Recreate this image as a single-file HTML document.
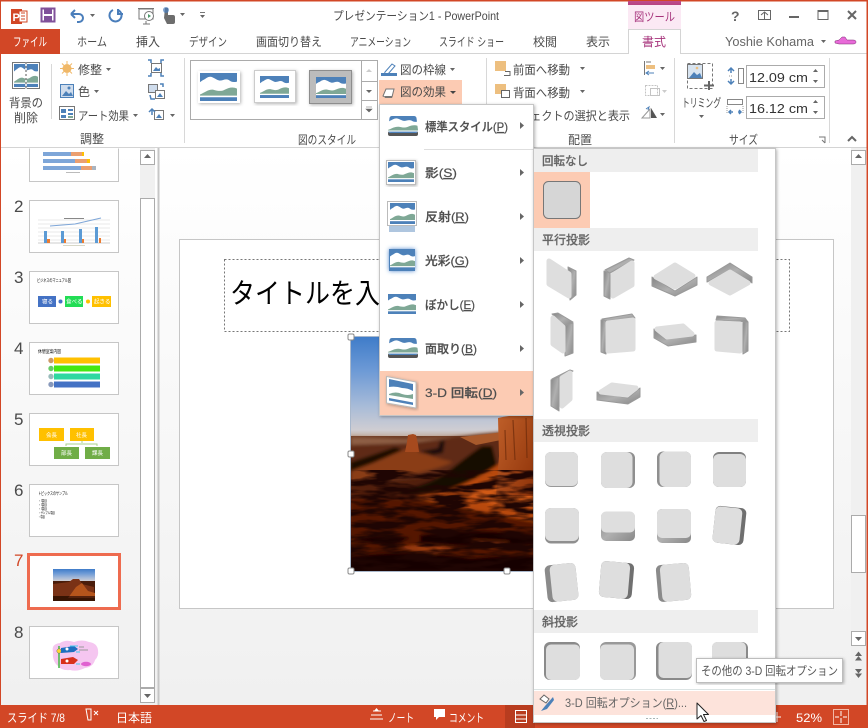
<!DOCTYPE html>
<html lang="ja">
<head>
<meta charset="utf-8">
<title>PowerPoint</title>
<style>
html,body{margin:0;padding:0;background:#fff;width:868px;height:728px;overflow:hidden}
svg{display:block}
text{font-family:"Liberation Sans","Noto Sans CJK JP",sans-serif;font-size:12px;fill:#4a4a4a}
.w{fill:#fff}
.mn{font-weight:500;fill:#4e4e4e;stroke:#4e4e4e;stroke-width:.2}
.hd{font-weight:500;fill:#666;stroke:#666;stroke-width:.2}
.f{fill:#dedede;stroke:#dedede;stroke-width:5;stroke-linejoin:round}
.s{fill:url(#sg);stroke:#9a9a9a;stroke-width:1;stroke-linejoin:round}
.d{fill:#dedede}
.a{fill:#666}
.i{fill:none;stroke:#666;stroke-width:1}
.btn{fill:#fff;stroke:#ababab;stroke-width:1}
.h{fill:#fff;stroke:#8a8a8a;stroke-width:1}
</style>
</head>
<body>
<svg width="868" height="728" viewBox="0 0 868 728" xmlns="http://www.w3.org/2000/svg">
<defs>
<linearGradient id="bg" x1="0" y1="0" x2="0" y2="1"><stop offset="0" stop-color="#fff"/><stop offset="1" stop-color="#f0f0f0"/></linearGradient>
<linearGradient id="sg" x1="0" y1="0" x2="1" y2="1"><stop offset="0" stop-color="#858585"/><stop offset=".5" stop-color="#b0b0b0"/><stop offset="1" stop-color="#888"/></linearGradient>
<linearGradient id="sky" x1="0" y1="0" x2="0" y2="1"><stop offset="0" stop-color="#3f7cc9"/><stop offset=".35" stop-color="#6f9bd6"/><stop offset=".7" stop-color="#a9bcd8"/><stop offset=".93" stop-color="#cfcdd2"/><stop offset="1" stop-color="#c2ada0"/></linearGradient>
<linearGradient id="gnd" x1="0" y1="0" x2="0" y2="1"><stop offset="0" stop-color="#6e3a22"/><stop offset=".2" stop-color="#4a2010"/><stop offset=".55" stop-color="#5a1e08"/><stop offset="1" stop-color="#200804"/></linearGradient>
<linearGradient id="rock" x1="0" y1="0" x2="1" y2="1"><stop offset="0" stop-color="#c0602a"/><stop offset="1" stop-color="#8e3208"/></linearGradient>
<linearGradient id="pinkb" x1="0" y1="0" x2="0" y2="1"><stop offset="0" stop-color="#c04c8c"/><stop offset="1" stop-color="#b5427f"/></linearGradient>
<filter id="sh" x="-10%" y="-10%" width="120%" height="120%"><feDropShadow dx="1" dy="1" stdDeviation="1.5" flood-color="#000" flood-opacity=".3"/></filter>
<filter id="glow" x="-30%" y="-30%" width="160%" height="160%"><feDropShadow dx="0" dy="0" stdDeviation="2" flood-color="#3f7cc9" flood-opacity=".9"/></filter>
<filter id="soft" x="-10%" y="-10%" width="120%" height="120%"><feGaussianBlur stdDeviation="1.6"/></filter>
<filter id="blur1"><feGaussianBlur stdDeviation=".35"/></filter>
<filter id="tex" x="0" y="0" width="100%" height="100%" color-interpolation-filters="sRGB"><feTurbulence type="fractalNoise" baseFrequency=".03 .14" numOctaves="3" seed="4"/><feColorMatrix values="0 0 0 0 .12  0 0 0 0 .02  0 0 0 0 .01  4 0 0 0 -1.5"/></filter>
<symbol id="pic" viewBox="0 0 36 26" preserveAspectRatio="none">
<rect width="36" height="26" fill="#fff"/>
<path d="M0 0H36V8C32 9 30 8 28 6.500C25 5 22 7 20 7C17 7.500 13 3.500 10 3.500C7 3.500 5 6 3 6.500L0 8.500Z" fill="#4d81b9"/>
<path d="M0 20C5 18 8 15 13 15.500C17 16.500 20 17.500 24 15.500C28 13.500 32 12.500 36 14.500V21H0Z" fill="#7fa896"/>
<rect y="22.500" width="36" height="3.500" fill="#4d81b9"/>
</symbol>
<clipPath id="trap"><path d="M4 0H26Q28 0 28.500 2L30 14Q30 17 27 17H3Q0 17 0 14L1.500 2Q2 0 4 0Z"/></clipPath>
<clipPath id="photo"><rect x="351" y="337" width="183" height="234"/></clipPath>
</defs>

<!-- base -->
<rect width="868" height="728" fill="#fff"/>
<rect x="0" y="148" width="868" height="557" fill="url(#bg)"/>

<!-- title bar -->
<rect x="0" y="0" width="868" height="1.500" fill="#d24726"/>
<rect x="11" y="9" width="11" height="15" fill="#d24726"/><rect x="19" y="11" width="8" height="11" fill="#fff" stroke="#d24726"/>
<path d="M21 13h4M21 16h4M21 19h4" stroke="#d24726"/>
<text x="12.500" y="21" class="w" style="font-size:11px;font-weight:700">P</text>
<rect x="41.500" y="8.500" width="13" height="13" fill="none" stroke="#80519a" stroke-width="2"/><rect x="44" y="9" width="8" height="5" fill="#80519a"/><rect x="44" y="16" width="8" height="5" fill="#80519a"/>
<path d="M71 14l4-4M71 14l4 4M71 14h8a4 4 0 0 1 0 8h-2" fill="none" stroke="#4a7ebb" stroke-width="2"/>
<path class="a" d="M90 14h5l-2.500 3z"/>
<path d="M113 10a6 6 0 1 0 5 0M118 9v5h5" fill="none" stroke="#4a7ebb" stroke-width="2"/>
<rect x="139" y="9" width="14" height="10" fill="none" stroke="#777"/><path d="M138 8.500h16" stroke="#777"/><circle cx="149" cy="16" r="4.500" fill="#fff" stroke="#777"/><path d="M148 14l3 2-3 2z" fill="#4f9a6c"/><path d="M146 21v3M143 24h7" stroke="#777"/>
<path d="M165 8h3v7h5q2 0 2 2v5q0 2-2 2h-6l-3-6z" fill="#6d6d6d"/><circle cx="166" cy="10" r="3" fill="#4a7ebb" opacity=".7"/>
<path class="a" d="M180 13h5l-2.500 3z"/>
<path d="M200 12.500h5" stroke="#777"/><path class="a" d="M200 15h5l-2.500 3z"/>
<text x="333" y="20" textLength="166" lengthAdjust="spacingAndGlyphs">プレゼンテーション1 - PowerPoint</text>

<rect x="628" y="1" width="53" height="4" fill="url(#pinkb)"/>
<rect x="628" y="5" width="53" height="24" fill="#fbe9f4"/>
<text x="634" y="21" textLength="41" lengthAdjust="spacingAndGlyphs" style="fill:#a6337b">図ツール</text>

<text x="731" y="21" style="font-size:14px;font-weight:700;fill:#666">?</text>
<rect x="758.500" y="10.500" width="12" height="9" class="i"/><path d="M761 15l3.500-3 3.500 3M764.500 12v7" class="i"/>
<rect x="789" y="16" width="10" height="2" fill="#666"/>
<rect x="818" y="10.500" width="10" height="9" fill="none" stroke="#666"/><rect x="818" y="10" width="10" height="2" fill="#666"/>
<path d="M848 11l8 8M856 11l-8 8" stroke="#666" stroke-width="2"/>

<!-- tabs -->
<path d="M0 53.500H628M681 53.500H868" stroke="#d4d4d4"/>
<rect x="0" y="29" width="60" height="25" fill="#d24726"/>
<text x="13" y="46" class="w" textLength="34" lengthAdjust="spacingAndGlyphs">ファイル</text>
<text x="77" y="46" textLength="30" lengthAdjust="spacingAndGlyphs">ホーム</text>
<text x="136" y="46" textLength="24" lengthAdjust="spacingAndGlyphs">挿入</text>
<text x="189" y="46" textLength="38" lengthAdjust="spacingAndGlyphs">デザイン</text>
<text x="256" y="46" textLength="66" lengthAdjust="spacingAndGlyphs">画面切り替え</text>
<text x="350" y="46" textLength="61" lengthAdjust="spacingAndGlyphs">アニメーション</text>
<text x="439" y="46" textLength="65" lengthAdjust="spacingAndGlyphs">スライド ショー</text>
<text x="533" y="46" textLength="24" lengthAdjust="spacingAndGlyphs">校閲</text>
<text x="586" y="46" textLength="24" lengthAdjust="spacingAndGlyphs">表示</text>
<path d="M628.500 54V29.500H680.500V54" fill="#fff" stroke="#d4d4d4"/>
<text x="642" y="46" textLength="24" lengthAdjust="spacingAndGlyphs" style="fill:#a6337b">書式</text>
<text x="725" y="46" textLength="89" lengthAdjust="spacingAndGlyphs" style="font-size:13px;fill:#666">Yoshie Kohama</text>
<path class="a" d="M821 40h5l-2.500 3z"/>
<path d="M835 41l4-1 3-3h3l2 3h6q3 0 3 2t-3 2h-14l-4-1z" fill="#e86ad8" stroke="#7a2b70" stroke-width=".5"/>

<!-- ribbon: 調整 -->
<rect x="12.500" y="62.500" width="27" height="26" fill="#fff" stroke="#777"/>
<use href="#pic" x="14" y="64" width="24" height="23"/>
<path d="M26 62v28" stroke="#fff" stroke-width="1.500"/><path d="M26 62v28" stroke="#555" stroke-dasharray="2 2"/>
<text x="9" y="107" textLength="34" lengthAdjust="spacingAndGlyphs">背景の</text>
<text x="14" y="122" textLength="24" lengthAdjust="spacingAndGlyphs">削除</text>
<path d="M51.500 64v55" stroke="#d8d8d8"/>
<circle cx="67" cy="68.500" r="4.500" fill="#f0b868"/>
<path d="M67 61v3M67 73v3M60 68.500h3M71 68.500h3M62 63.500l2 2M70 71.500l2 2M62 73.500l2-2M70 65.500l2-2" stroke="#f0b868"/>
<text x="78" y="74" textLength="24" lengthAdjust="spacingAndGlyphs">修整</text>
<path class="a" d="M106 68h5l-2.500 3z"/>
<rect x="60.500" y="84.500" width="13" height="13" fill="#cfdcec" stroke="#4d81b9"/><path d="M62 96l4-5 3 3 2-2 2 4z" fill="#4d81b9"/><circle cx="69" cy="88" r="1.500" fill="#4d81b9"/>
<text x="78" y="96" textLength="12" lengthAdjust="spacingAndGlyphs">色</text>
<path class="a" d="M94 90h5l-2.500 3z"/>
<rect x="59.500" y="106.500" width="15" height="13" fill="#fff" stroke="#777"/><path d="M61 109h5v4h-5zM68 109h5v2h-5zM68 113h5v2h-5zM61 115h5v3h-5z" fill="#4d81b9"/><path d="M68 117h5" stroke="#7fa896" stroke-width="2"/>
<text x="78" y="120" textLength="51" lengthAdjust="spacingAndGlyphs">アート効果</text>
<path class="a" d="M133 114h5l-2.500 3z"/>
<rect x="151.500" y="63.500" width="10" height="9" fill="#fff" stroke="#777"/><path d="M153 71l3-4 2 2 2-1v3z" fill="#4d81b9"/>
<path d="M148 60h3v3M164 60h-3v3M148 76h3v-3M164 76h-3v-3" fill="none" stroke="#4d81b9" stroke-width="1.500"/>
<rect x="148.500" y="84.500" width="9" height="8" fill="#cfdcec" stroke="#777"/><rect x="155.500" y="90.500" width="9" height="8" fill="#fff" stroke="#777"/><path d="M157 97l3-4 3 4z" fill="#4d81b9"/><path d="M150 95l1 4h4M160 84h3v3" fill="none" stroke="#4d81b9" stroke-width="1.500"/>
<rect x="154.500" y="110.500" width="9" height="9" fill="#fff" stroke="#777"/><path d="M156 118l3-4 3 4z" fill="#4d81b9"/><path d="M149 112l3-3 3 3M152 110v5" fill="none" stroke="#4d81b9" stroke-width="1.500"/>
<path class="a" d="M170 114h5l-2.500 3z"/>
<text x="80" y="143" textLength="24" lengthAdjust="spacingAndGlyphs">調整</text>
<path d="M184.500 58v85" stroke="#d8d8d8"/>

<!-- gallery -->
<rect x="190.500" y="60.500" width="187" height="59" fill="#fff" stroke="#ababab"/>
<path d="M361.500 60v60M361 81.500h17M361 100.500h17" stroke="#ababab"/>
<path d="M366 72h6l-3-3z" fill="#ccc"/><path class="a" d="M366 90h6l-3 3z"/>
<path d="M366 107h6M366 109h6l-3 3z" fill="#666" stroke="#666" stroke-width=".6"/>
<rect x="198" y="71" width="42" height="32" fill="#fff" filter="url(#sh)"/><use href="#pic" x="200" y="73" width="37" height="28"/>
<rect x="254.500" y="70.500" width="41" height="32" fill="#fff" stroke="#ccc" filter="url(#sh)"/><use href="#pic" x="260" y="76" width="29" height="22"/>
<rect x="309.500" y="70.500" width="42" height="33" fill="#bcbcbc" stroke="#8d8d8d" filter="url(#sh)"/><use href="#pic" x="316" y="77" width="30" height="21"/>
<text x="298" y="144" textLength="58" lengthAdjust="spacingAndGlyphs">図のスタイル</text>

<!-- picture border/effect -->
<path d="M385 72l7-8 3 2-7 8-4 1z" fill="#fff" stroke="#4d81b9"/><rect x="381" y="73" width="16" height="3" fill="#4d81b9"/>
<text x="400" y="74" textLength="46" lengthAdjust="spacingAndGlyphs">図の枠線</text>
<path class="a" d="M450 68h5l-2.500 3z"/>
<rect x="379" y="80" width="83" height="24" fill="#fccbb3"/>
<path d="M383 96l3-7h8l-2 8-7 0z" fill="#fff" stroke="#777"/><path d="M385 97h7" stroke="#777" stroke-width="2"/>
<text x="400" y="96" textLength="46" lengthAdjust="spacingAndGlyphs">図の効果</text>
<path d="M450 91h6l-3 3z" fill="#444"/>
<path d="M486.500 58v85" stroke="#d8d8d8"/>

<!-- arrange -->
<rect x="495" y="61" width="11" height="10" fill="#edbf7f"/><path d="M505 71.500h5v4h-6" fill="none" stroke="#666"/>
<text x="513" y="74" textLength="57" lengthAdjust="spacingAndGlyphs">前面へ移動</text>
<path class="a" d="M580 67h5l-2.500 3z"/>
<rect x="495" y="84" width="11" height="10" fill="#edbf7f"/><rect x="501.500" y="90.500" width="8" height="7" fill="#fff" stroke="#666"/>
<text x="513" y="97" textLength="57" lengthAdjust="spacingAndGlyphs">背面へ移動</text>
<path class="a" d="M580 90h5l-2.500 3z"/>
<text x="497" y="120" textLength="133" lengthAdjust="spacingAndGlyphs">オブジェクトの選択と表示</text>
<text x="568" y="144" textLength="24" lengthAdjust="spacingAndGlyphs">配置</text>
<path d="M644.500 61v14" stroke="#777"/><rect x="646" y="65" width="9" height="4" fill="#edbf7f"/><path d="M646 62h5" stroke="#777"/><path d="M646 73h8M649 71l-3 2 3 2" fill="none" stroke="#4d81b9"/>
<path class="a" d="M660 67h5l-2.500 3z"/>
<rect x="645.500" y="85.500" width="12" height="10" fill="none" stroke="#c4c4c4" stroke-dasharray="2 1"/><rect x="650.500" y="88.500" width="9" height="7" fill="none" stroke="#c4c4c4"/>
<path d="M662 90h5l-2.500 3z" fill="#ccc"/>
<path d="M642 118l8-9v9z" fill="#fff" stroke="#999"/><path d="M651 108l6 10h-6z" fill="#555"/><path d="M646 109l3-2-1 3" stroke="#4d81b9" fill="none"/>
<path class="a" d="M660 113h5l-2.500 3z"/>
<path d="M674.500 58v85" stroke="#d8d8d8"/>

<!-- size -->
<rect x="687.500" y="63.500" width="25" height="25" fill="none" stroke="#777" stroke-dasharray="3 2"/>
<rect x="687.500" y="64.500" width="15" height="14" fill="#d8e4f0" stroke="#777"/><path d="M689 78l5-6 3 3 3-2 2 5z" fill="#4d81b9"/><circle cx="697" cy="68" r="1.300" fill="#edbf7f"/>
<path d="M709 81v9M704 85.500h10" stroke="#666" stroke-width="2"/>
<text x="682" y="107" textLength="39" lengthAdjust="spacingAndGlyphs">トリミング</text>
<path class="a" d="M699 115h5l-2.500 3z"/>
<rect x="738.500" y="68.500" width="5" height="15" fill="none" stroke="#888"/><path d="M731 69v4M731 79v4M728 71l3-3 3 3M728 81l3 3 3-3" fill="none" stroke="#4d81b9" stroke-width="1.500"/><path d="M729 76h4" stroke="#999" stroke-dasharray="1 1"/>
<rect x="746.500" y="65.500" width="78" height="22" fill="#fff" stroke="#ababab"/>
<text x="749" y="82" textLength="59" lengthAdjust="spacingAndGlyphs" style="font-size:13px;fill:#333">12.09 cm</text>
<path class="a" d="M813 72h5l-2.500-3zM813 80h5l-2.500 3z"/>
<rect x="727.500" y="99.500" width="15" height="5" fill="none" stroke="#888"/><path d="M727 106v8M743 106v8" stroke="#999" stroke-dasharray="1 1"/><path d="M729 112h4M738 112h3M731 110l-2 2 2 2M739 110l2 2-2 2" fill="none" stroke="#4d81b9" stroke-width="1.500"/>
<rect x="746.500" y="96.500" width="78" height="22" fill="#fff" stroke="#ababab"/>
<text x="749" y="113" textLength="59" lengthAdjust="spacingAndGlyphs" style="font-size:13px;fill:#333">16.12 cm</text>
<path class="a" d="M813 103h5l-2.500-3zM813 111h5l-2.500 3z"/>
<text x="729" y="144" textLength="29" lengthAdjust="spacingAndGlyphs">サイズ</text>
<path d="M819 137h6v6M822 140l3 3" fill="none" stroke="#777"/>
<path d="M829.500 58v85" stroke="#d8d8d8"/>
<path d="M848 141l4-4 4 4" fill="none" stroke="#666" stroke-width="2"/>
<path d="M0 147.500H868" stroke="#d4d4d4"/>

<!-- slide pane -->
<path d="M158.500 148V705" stroke="#c6c6c6" stroke-width="2"/>
<rect x="140" y="148" width="15" height="557" fill="#f0f0f0"/>
<rect x="140.500" y="150.500" width="14" height="14" class="btn"/><path class="a" d="M144 158h7l-3.500-4z"/>
<rect x="140.500" y="198.500" width="14" height="489" class="btn"/>
<rect x="140.500" y="688.500" width="14" height="14" class="btn"/><path class="a" d="M144 694h7l-3.500 4z"/>

<text x="14" y="212" style="font-size:17px">2</text>
<text x="14" y="283" style="font-size:17px">3</text>
<text x="14" y="354" style="font-size:17px">4</text>
<text x="14" y="425" style="font-size:17px">5</text>
<text x="14" y="496" style="font-size:17px">6</text>
<text x="14" y="566" style="font-size:17px;fill:#d24726">7</text>
<text x="14" y="638" style="font-size:17px">8</text>

<!-- thumb 1 -->
<path d="M29.500 148.500V181.500H118.500V148.500" fill="#fff" stroke="#c6c6c6"/>
<g filter="url(#blur1)">
<rect x="43" y="152" width="28" height="4" fill="#7ea6d8"/><rect x="71" y="152" width="11" height="4" fill="#eb9f70"/><rect x="82" y="152" width="2" height="4" fill="#ffc000"/>
<rect x="43" y="159" width="32" height="4" fill="#7ea6d8"/><rect x="75" y="159" width="12" height="4" fill="#eb9f70"/><rect x="87" y="159" width="3" height="4" fill="#ffc000"/>
<rect x="43" y="166" width="38" height="4" fill="#7ea6d8"/><rect x="81" y="166" width="11" height="4" fill="#eb9f70"/><rect x="92" y="166" width="4" height="4" fill="#a9b4c0"/>
<rect x="66" y="172" width="14" height="1" fill="#bbb"/>
</g>
<!-- thumb 2 -->
<rect x="29.500" y="200.500" width="89" height="52" fill="#fff" stroke="#c6c6c6"/>
<g filter="url(#blur1)">
<path d="M38 220h72M38 224h72M38 228h72M38 232h72M38 236h72M38 240h72" stroke="#e8e8e8"/>
<path d="M38 243h72" stroke="#ccc"/>
<path d="M50 226l25-2 26-6" fill="none" stroke="#7ea6d8"/>
<rect x="64" y="218" width="20" height="1" fill="#888"/>
<rect x="44" y="231" width="3" height="12" fill="#5b9bd5"/><rect x="47" y="239" width="3" height="4" fill="#ed7d31"/>
<rect x="61" y="231" width="3" height="12" fill="#5b9bd5"/><rect x="64" y="239" width="2" height="4" fill="#ed7d31"/>
<rect x="79" y="229" width="3" height="14" fill="#5b9bd5"/><rect x="82" y="239" width="2" height="4" fill="#ed7d31"/>
<rect x="95" y="227" width="3" height="16" fill="#5b9bd5"/><rect x="99" y="238" width="2" height="5" fill="#ed7d31"/>
<rect x="63" y="245" width="22" height="1" fill="#d8d8c8"/>
</g>
<!-- thumb 3 -->
<rect x="29.500" y="271.500" width="89" height="52" fill="#fff" stroke="#c6c6c6"/>
<text x="37" y="282" textLength="34" lengthAdjust="spacingAndGlyphs" style="font-size:4.500px;fill:#000">ビジネスのマニュアル図</text>
<rect x="38" y="296" width="18" height="11" fill="#4472c4"/><text x="42" y="303.500" style="font-size:5.500px" class="w">寝る</text>
<circle cx="60.500" cy="301.500" r="2" fill="#4472c4"/>
<rect x="65" y="296" width="18" height="11" fill="#22dd55"/><text x="66" y="303.500" style="font-size:5.500px" class="w">食べる</text>
<circle cx="88" cy="301.500" r="2" fill="#ffc000"/>
<rect x="92" y="296" width="19" height="11" fill="#ffc000"/><text x="94" y="303.500" style="font-size:5.500px" class="w">起きる</text>
<!-- thumb 4 -->
<rect x="29.500" y="342.500" width="89" height="52" fill="#fff" stroke="#c6c6c6"/>
<text x="38" y="353" textLength="23" lengthAdjust="spacingAndGlyphs" style="font-size:4.500px;fill:#000">休憩室案内図</text>
<rect x="54" y="357.500" width="46" height="6" fill="#ffc000"/><circle cx="51" cy="360.500" r="2.700" fill="#cc9966"/>
<rect x="54" y="365.500" width="46" height="6" fill="#44e811"/><circle cx="51" cy="368.500" r="2.700" fill="#66cc66"/>
<rect x="54" y="373.500" width="46" height="6" fill="#2ed8a0"/><circle cx="51" cy="376.500" r="2.700" fill="#99bbbb"/>
<rect x="54" y="381.500" width="46" height="6" fill="#4472c4"/><circle cx="51" cy="384.500" r="2.700" fill="#8899bb"/>
<!-- thumb 5 -->
<rect x="29.500" y="413.500" width="89" height="52" fill="#fff" stroke="#c6c6c6"/>
<rect x="39" y="428" width="25" height="13" fill="#ffc000"/><text x="46" y="437" style="font-size:5.500px" class="w">会長</text>
<rect x="70" y="428" width="24" height="13" fill="#ffc000"/><text x="76" y="437" style="font-size:5.500px" class="w">社長</text>
<path d="M82 441v2M66 446v-2h31v2" fill="none" stroke="#a9d18e"/>
<rect x="54" y="447" width="25" height="12" fill="#70ad47"/><text x="61" y="455" style="font-size:5.500px" class="w">部長</text>
<rect x="85" y="447" width="25" height="12" fill="#70ad47"/><text x="92" y="455" style="font-size:5.500px" class="w">課長</text>
<!-- thumb 6 -->
<rect x="29.500" y="484.500" width="89" height="52" fill="#fff" stroke="#c6c6c6"/>
<text x="38" y="495" textLength="30" lengthAdjust="spacingAndGlyphs" style="font-size:4.500px;fill:#000">トピックスのサンプル</text>
<text x="38" y="502" textLength="9" lengthAdjust="spacingAndGlyphs" style="font-size:3.500px;fill:#000">・項目</text>
<text x="38" y="506" textLength="9" lengthAdjust="spacingAndGlyphs" style="font-size:3.500px;fill:#000">・項目</text>
<text x="38" y="510" textLength="9" lengthAdjust="spacingAndGlyphs" style="font-size:3.500px;fill:#000">・項目</text>
<text x="38" y="514" textLength="17" lengthAdjust="spacingAndGlyphs" style="font-size:3.500px;fill:#000">・サンプル項目</text>
<text x="38" y="518" textLength="7" lengthAdjust="spacingAndGlyphs" style="font-size:3.500px;fill:#000">・項目</text>
<!-- thumb 7 -->
<rect x="28.500" y="554.500" width="91" height="54" fill="#fff" stroke="#ee6b4f" stroke-width="3"/>
<rect x="53" y="569" width="42" height="13" fill="url(#sky)"/>
<rect x="53" y="581" width="42" height="20" fill="#4a1c0a"/>
<g filter="url(#blur1)"><path d="M53 584l16-2 4-3h6l3 5 12 3v9H53z" fill="#7a3212"/><path d="M68 598l8-11 6-4 6 8 7 2v5z" fill="#b5541f"/><rect x="53" y="596" width="42" height="5" fill="#2c0c04" opacity=".7"/></g>
<!-- thumb 8 -->
<rect x="29.500" y="626.500" width="89" height="52" fill="#fff" stroke="#c6c6c6"/>
<path d="M53 652q-2-8 7-9 6-4 14-1 8-3 15 0 8 1 9 8 1 6-3 10-2 7-10 8-8 4-15 2-8 1-12-4-6-5-5-14z" fill="#f5c6f0"/>
<path d="M59 646v22" stroke="#44bb44" stroke-width="1.500"/><circle cx="59" cy="651" r="2.200" fill="#ffd633" stroke="#555" stroke-width=".4"/>
<path d="M61 648l13-2 4 3-4 3-13 1z" fill="#1f6fc0"/><circle cx="67" cy="649" r="1.500" fill="#fff"/>
<path d="M61 659l12-2 5 3-4 4-13 0z" fill="#d8301c"/><circle cx="67" cy="661" r="1.500" fill="#fff"/>
<path d="M70 646h8M76 652h4M76 664h4" stroke="#44ccee"/>
<ellipse cx="86" cy="664" rx="5" ry="2.200" fill="#e060d0"/>
<path d="M79 647h5M79 650h9" stroke="#999"/>

<!-- main slide -->
<rect x="179.500" y="239.500" width="654" height="369" fill="#fff" stroke="#c6c6c6"/>
<rect x="224.500" y="259.500" width="565" height="72" fill="none" stroke="#777" stroke-dasharray="2 2"/>
<text x="230" y="303" textLength="175" lengthAdjust="spacingAndGlyphs" style="font-size:28px;fill:#000">タイトルを入力</text>

<!-- photo -->
<rect x="350.500" y="336.500" width="184" height="235" fill="none" stroke="#a9b8cc"/>
<g clip-path="url(#photo)">
<rect x="351" y="337" width="183" height="100" fill="url(#sky)"/>
<rect x="351" y="436" width="183" height="135" fill="url(#gnd)"/>
<g filter="url(#soft)">
<path d="M351 437l30 1 25 1 50-2 22-3 20-2 36-4v30H351z" fill="#8e5e44"/>
<path d="M351 445l60-2 45-6 30-3 47-3v30l-60 10-60 8-62 6z" fill="#5e2c16"/>
<path d="M351 472q30-18 62-24 20 10 40 14-30 14-102 20z" fill="#8a3c16"/>
<path d="M351 462q25-8 44-15l8 3-30 13-22 8z" fill="#1c0c06"/>
<path d="M418 452l20-4 2-7 5-1-2 13-10 2z" fill="#1c0f0c"/>
<path d="M400 490q30-4 50-20t32-24l10 0 6 24q-40 24-98 24z" fill="#150705"/>
<path d="M415 496q40-2 84-32l37 2v62q-60-10-121-32z" fill="#b8480e"/>
<path d="M465 494q30-8 71-20v34q-40 2-71-14z" fill="#d05a16"/>
<path d="M351 500q50-4 90 4l95 18v49H351z" fill="#551806"/>
<path d="M351 540q30-8 60-2l-20 8zM420 535q50-8 116 0v10q-60 4-116-2zM351 556q60-8 120 2 40-4 65-2v15H351z" fill="#120402"/>
<path d="M395 548q30-6 60 0l-20 6zM470 540l40 2-20 6z" fill="#9a3a10"/>
</g>
<path d="M405 452l2-10 1-7 5-1 3 1 2 9 1 8z" fill="#a64a1e"/>
<path d="M460 437l28-3 15-2 3 7-30 6z" fill="#a85a2c"/>
<path d="M498 418q15-4 36-2v80h-38l3-40z" fill="url(#rock)"/>
<path d="M513 420l2 40M526 418l1 40M505 430l1 30" stroke="#6c2a0a" stroke-width="1.200" opacity=".7"/>
<rect x="351" y="470" width="183" height="101" filter="url(#tex)"/>
</g>
<rect x="348" y="334" width="6" height="6" rx="1.500" class="h"/>
<rect x="348" y="451" width="6" height="6" rx="1.500" class="h"/>
<rect x="348" y="568" width="6" height="6" rx="1.500" class="h"/>
<rect x="504" y="568" width="6" height="6" rx="1.500" class="h"/>

<!-- right scrollbar -->
<rect x="851" y="148" width="15" height="557" fill="#f0f0f0"/>
<rect x="851.500" y="150.500" width="14" height="14" class="btn"/><path class="a" d="M855 158h7l-3.500-4z"/>
<rect x="851.500" y="515.500" width="14" height="57" class="btn"/>
<rect x="851.500" y="631.500" width="14" height="14" class="btn"/><path class="a" d="M855 637h7l-3.500 4z"/>
<path class="a" d="M855 656h7l-3.500-4.500zM855 660.500h7l-3.500-4.500zM855 669h7l-3.500 4.500zM855 673.500h7l-3.500 4.500z"/>
<rect x="866.500" y="0" width="1.500" height="728" fill="#d24726"/>
<rect x="0" y="0" width="1" height="728" fill="#d24726"/>

<!-- status bar -->
<rect x="0" y="705" width="868" height="23" fill="#d24726"/>
<text x="7" y="722" class="w" textLength="58" lengthAdjust="spacingAndGlyphs">スライド 7/8</text>
<path d="M86 709h5v11l-3 0zM91 709v11" fill="none" stroke="#fff"/><path d="M94 711l4 4M98 711l-4 4" stroke="#fff"/>
<text x="116" y="722" class="w" textLength="36" lengthAdjust="spacingAndGlyphs">日本語</text>
<path d="M373 711h8l0 0M371 715h11M370 719h13" stroke="#fff"/><path d="M374 711l2.500-3 2.500 3z" fill="#fff"/>
<text x="388" y="722" class="w" textLength="26" lengthAdjust="spacingAndGlyphs">ノート</text>
<path d="M434 709h11v8h-6l-3 3v-3h-2z" fill="#fff"/>
<text x="449" y="722" class="w" textLength="35" lengthAdjust="spacingAndGlyphs">コメント</text>
<rect x="505" y="705" width="30" height="23" fill="#b83c1f"/>
<rect x="515.500" y="710.500" width="11" height="12" fill="none" stroke="#fff"/><path d="M515 715h12M515 719h12" stroke="#fff"/>
<path d="M771 717h10M777 712v10" stroke="#fff"/>
<text x="796" y="722" class="w" textLength="26" lengthAdjust="spacingAndGlyphs">52%</text>
<rect x="833.500" y="709.500" width="15" height="15" fill="none" stroke="#f3b7a5"/><path d="M841 711v5M841 718v5M835 717h4M843 717h4" stroke="#fff"/>

<!-- first menu -->
<rect x="379.500" y="104.500" width="154" height="311" fill="#fff" stroke="#c6c6c6" filter="url(#sh)"/>
<path d="M424 149.500H533" stroke="#dedede"/>

<g transform="translate(388,116)"><rect x="0" y="15" width="30" height="5" rx="2" fill="#555" filter="url(#blur1)"/><g clip-path="url(#trap)"><use href="#pic" width="30" height="18"/></g></g>
<text x="425" y="131" class="mn" textLength="83" lengthAdjust="spacingAndGlyphs">標準スタイル(<tspan text-decoration="underline">P</tspan>)</text>
<path class="a" d="M520 122v7l4-3.500z"/>

<rect x="386.500" y="160.500" width="29" height="24" fill="#fff" stroke="#bbb" filter="url(#sh)"/><use href="#pic" x="388" y="162" width="26" height="20"/>
<text x="425" y="177" class="mn" textLength="32" lengthAdjust="spacingAndGlyphs">影(<tspan text-decoration="underline">S</tspan>)</text>
<path class="a" d="M520 169v7l4-3.500z"/>

<rect x="387.500" y="201.500" width="29" height="24" fill="#fff" stroke="#bbb"/><use href="#pic" x="390" y="203" width="25" height="21"/>
<rect x="389" y="226" width="26" height="6" fill="#4d81b9" opacity=".45"/>
<text x="425" y="221" class="mn" textLength="44" lengthAdjust="spacingAndGlyphs">反射(<tspan text-decoration="underline">R</tspan>)</text>
<path class="a" d="M520 213v7l4-3.500z"/>

<rect x="389" y="249" width="26" height="22" fill="#4d81b9" filter="url(#glow)"/><use href="#pic" x="390" y="250" width="25" height="20"/>
<text x="425" y="265" class="mn" textLength="44" lengthAdjust="spacingAndGlyphs">光彩(<tspan text-decoration="underline">G</tspan>)</text>
<path class="a" d="M520 257v7l4-3.500z"/>

<g filter="url(#blur1)"><use href="#pic" x="388" y="294" width="28" height="20"/></g>
<text x="425" y="309" class="mn" textLength="50" lengthAdjust="spacingAndGlyphs">ぼかし(<tspan text-decoration="underline">E</tspan>)</text>
<path class="a" d="M520 301v7l4-3.500z"/>

<g transform="translate(388,338)"><rect x="0" y="15" width="30" height="5" rx="2" fill="#555" filter="url(#blur1)"/><g clip-path="url(#trap)"><use href="#pic" width="30" height="18"/></g></g>
<text x="425" y="353" class="mn" textLength="52" lengthAdjust="spacingAndGlyphs">面取り(<tspan text-decoration="underline">B</tspan>)</text>
<path class="a" d="M520 345v7l4-3.500z"/>

<rect x="380" y="371" width="153" height="44" fill="#fccbb3"/>
<path d="M386.500 376.500L416 382V408L386.500 403Z" fill="#fff" stroke="#bbb" filter="url(#sh)"/>
<path d="M389 379L413 384V391Q408 388 402 388Q396 386 389 387Z" fill="#4d81b9"/>
<path d="M389 394Q396 391 402 394Q408 396 413 394V399L389 395Z" fill="#7fa896"/>
<path d="M389 398L413 402.500V405L389 400.500Z" fill="#4d81b9"/>
<text x="425" y="397" class="mn" textLength="72" lengthAdjust="spacingAndGlyphs">3-D 回転(<tspan text-decoration="underline">D</tspan>)</text>
<path class="a" d="M520 389v7l4-3.500z"/>

<!-- submenu -->
<rect x="533.500" y="148.500" width="242" height="574" fill="#fff" stroke="#c6c6c6" filter="url(#sh)"/>
<rect x="534" y="149" width="224" height="23" fill="#eeeeee"/>
<text x="542" y="165" class="hd" textLength="46" lengthAdjust="spacingAndGlyphs">回転なし</text>
<rect x="534" y="172" width="56" height="56" fill="#fccbb3"/>
<rect x="543.500" y="181.500" width="37" height="37" rx="5" fill="#d6d6d6" stroke="#777"/>
<rect x="534" y="228" width="224" height="23" fill="#eeeeee"/>
<text x="542" y="244" class="hd" textLength="48" lengthAdjust="spacingAndGlyphs">平行投影</text>
<rect x="534" y="419" width="224" height="23" fill="#eeeeee"/>
<text x="542" y="435" class="hd" textLength="48" lengthAdjust="spacingAndGlyphs">透視投影</text>
<rect x="534" y="610" width="224" height="23" fill="#eeeeee"/>
<text x="542" y="626" class="hd" textLength="36" lengthAdjust="spacingAndGlyphs">斜投影</text>

<!-- parallel shapes -->
<polygon class="s" points="568,267 576,271 576,295 570,300"/><polygon class="f" points="549,261 569,274 569,296 549,284"/>
<polygon class="s" points="604,271 610,273 610,299 604,296"/><polygon class="s" points="605,270 629,258 634,260 610,273"/><polygon class="f" points="613,275 632,263 632,285 613,296"/>
<polygon class="s" points="652,277 675,291 697,277 697,285 675,296 652,286"/><polygon class="f" points="656,277 675,265 693,276 675,287"/>
<polygon class="s" points="707,277 730,263 752,277 752,283 730,270 707,282"/><polygon class="f" points="711,283 730,272 748,283 730,293"/>
<polygon class="s" points="565,325 573,323 573,353 565,356"/><polygon class="s" points="552,314 558,313 573,322 565,326"/><polygon class="f" points="553,318 563,327 563,351 553,344"/>
<polygon class="s" points="601,320 606,320 606,354 601,352"/><polygon class="s" points="602,319 632,314 635,318 606,321"/><polygon class="f" points="608,323 633,320 633,349 608,351"/>
<polygon class="s" points="654,329 665,339 696,335 696,342 668,346 654,338"/><polygon class="f" points="657,329 683,326 692,334 667,337"/>
<polygon class="s" points="743,322 748,322 748,351 743,354"/><polygon class="s" points="717,316 745,318 748,322 716,320"/><polygon class="f" points="717,323 740,324 740,351 717,349"/>
<polygon class="s" points="551,380 559,376 559,411 551,406"/><polygon class="s" points="552,379 570,370 573,371 559,377"/><polygon class="f" points="562,378 570,373 570,399 562,406"/>
<polygon class="s" points="597,392 628,398 640,388 640,397 628,404 597,400"/><polygon class="f" points="601,392 612,385 636,388 627,395"/>

<!-- perspective shapes -->
<rect x="545" y="452" width="33" height="35" rx="6" fill="#999"/><rect x="545" y="452" width="33" height="34" rx="6" class="d"/>
<rect x="601" y="452" width="34" height="36" rx="6" fill="#8f8f8f"/><rect x="601" y="452" width="31.500" height="36" rx="6" class="d"/>
<rect x="657" y="451.500" width="34" height="35.500" rx="6" fill="#8f8f8f"/><rect x="659.500" y="451.500" width="31.500" height="35.500" rx="6" class="d"/>
<rect x="713" y="452" width="33" height="35" rx="6" fill="#808080"/><rect x="713" y="454" width="33" height="33" rx="6" class="d"/>
<rect x="545" y="508" width="34" height="35.500" rx="6" fill="#8f8f8f"/><rect x="545" y="508" width="34" height="33" rx="6" class="d"/>
<rect x="601" y="512" width="34" height="29" rx="5" fill="url(#sg)"/><rect x="601" y="511.500" width="34" height="21" rx="5" class="d"/>
<rect x="657" y="509" width="34" height="34" rx="5" fill="url(#sg)"/><rect x="657" y="509" width="34" height="29" rx="5" class="d"/>
<g transform="rotate(6 730 525)"><rect x="714" y="507" width="31" height="37" rx="5" fill="#6f6f6f"/><rect x="714" y="507.500" width="27" height="36.500" rx="5" class="d"/></g>
<g transform="rotate(-6 562 582)"><rect x="546" y="564" width="31" height="37" rx="5" fill="#8a8a8a"/><rect x="551" y="564" width="26" height="37" rx="5" class="d"/></g>
<g transform="rotate(5 616 580)"><rect x="600" y="562" width="33" height="36" rx="5" fill="#707070"/><rect x="600" y="562" width="29" height="36" rx="5" class="d"/></g>
<g transform="rotate(-5 673 582)"><rect x="657" y="564" width="33" height="37" rx="5" fill="#8a8a8a"/><rect x="661" y="564" width="29" height="37" rx="5" class="d"/></g>

<!-- oblique -->
<rect x="544" y="642" width="36" height="38" rx="6" fill="#8a8a8a"/><rect x="546" y="644.500" width="34" height="35.500" rx="5" class="d"/>
<rect x="600" y="642" width="36" height="38" rx="6" fill="#999"/><rect x="600" y="644.500" width="34" height="35.500" rx="5" class="d"/>
<rect x="656" y="642" width="36" height="38" rx="6" fill="#8a8a8a"/><rect x="658.500" y="642" width="33.500" height="36" rx="5" class="d"/>
<rect x="712" y="642" width="36" height="38" rx="6" fill="#8a8a8a"/><rect x="712" y="642" width="34" height="38" rx="5" class="d"/>

<path d="M534 689.500H775" stroke="#dce4e4"/>
<rect x="534" y="691" width="241" height="24" fill="#fde3db"/>
<path d="M540 699l4-4 5 4-3 4z" fill="#fff" stroke="#666"/><path d="M553 697l-8 9-4 5 6-2 7-9z" fill="#4d81b9"/>
<text x="565" y="707" textLength="122" lengthAdjust="spacingAndGlyphs" style="fill:#666">3-D 回転オプション(<tspan text-decoration="underline">R</tspan>)...</text>
<path d="M646 718.500h12" stroke="#a9b4b4" stroke-dasharray="2 1.500"/>

<!-- cursor -->
<path d="M697 703V719L701 715.500L704 721.500L706.500 720.500L703.500 714.500H708.500Z" fill="#fff" stroke="#222" stroke-width="1" stroke-linejoin="round"/>

<!-- tooltip -->
<rect x="696.500" y="658.500" width="146" height="24" fill="#fff" stroke="#bdbdbd" filter="url(#sh)"/>
<text x="701" y="675" textLength="137" lengthAdjust="spacingAndGlyphs" style="fill:#575757">その他の 3-D 回転オプション</text>
</svg>
</body>
</html>
